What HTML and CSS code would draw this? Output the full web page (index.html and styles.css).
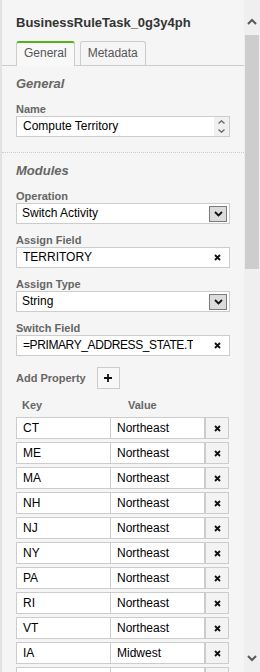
FILE: index.html
```html
<!DOCTYPE html>
<html lang="en">
<head>
    <meta charset="UTF-8">
    <meta name="viewport" content="width=device-width, initial-scale=1.0">
    <title>BusinessRuleTask properties</title>
    <link rel="stylesheet" href="styles.css">
</head>
<body>
    <div class="panel">
        <div class="title">BusinessRuleTask_0g3y4ph</div>
        <div class="tabs">
            <div class="tab active">General</div>
            <div class="tab">Metadata</div>
        </div>

        <div class="section">
            <div class="heading">General</div>
            <div class="field last">
                <div class="label">Name</div>
                <div class="input">
                    <span class="text">Compute Territory</span>
                    <span class="spinner">
                        <svg width="7" height="4" viewBox="0 0 7 4"><path d="M0.5 3.5L3.5 0.8L6.5 3.5" stroke="#666" stroke-width="1.3" fill="none"/></svg>
                        <svg width="7" height="4" viewBox="0 0 7 4"><path d="M0.5 0.5L3.5 3.2L6.5 0.5" stroke="#666" stroke-width="1.3" fill="none"/></svg>
                    </span>
                </div>
            </div>
        </div>

        <div class="section dotted">
            <div class="heading">Modules</div>
            <div class="field">
                <div class="label">Operation</div>
                <div class="input select">
                    <span class="text">Switch Activity</span>
                    <span class="drop"><svg width="9" height="6" viewBox="0 0 9 6"><path d="M1 1L4.5 4.5L8 1" stroke="#111" stroke-width="1.8" fill="none"/></svg></span>
                </div>
            </div>
            <div class="field">
                <div class="label">Assign Field</div>
                <div class="input">
                    <span class="text">TERRITORY</span>
                    <span class="clear"><svg width="7" height="7" viewBox="0 0 7 7"><path d="M1 1L6 6M6 1L1 6" stroke="#111" stroke-width="1.8"/></svg></span>
                </div>
            </div>
            <div class="field">
                <div class="label">Assign Type</div>
                <div class="input select">
                    <span class="text">String</span>
                    <span class="drop"><svg width="9" height="6" viewBox="0 0 9 6"><path d="M1 1L4.5 4.5L8 1" stroke="#111" stroke-width="1.8" fill="none"/></svg></span>
                </div>
            </div>
            <div class="field">
                <div class="label">Switch Field</div>
                <div class="input">
                    <span class="text tight">=PRIMARY_ADDRESS_STATE.T</span>
                    <span class="clear"><svg width="7" height="7" viewBox="0 0 7 7"><path d="M1 1L6 6M6 1L1 6" stroke="#111" stroke-width="1.8"/></svg></span>
                </div>
            </div>

            <div class="add-row">
                <span class="label">Add Property</span>
                <span class="add-btn"><svg width="8" height="8" viewBox="0 0 8 8"><path d="M4 0V8M0 4H8" stroke="#111" stroke-width="1.8"/></svg></span>
            </div>

            <div class="kv-head">
                <span class="kh-key">Key</span>
                <span class="kh-value">Value</span>
            </div>
            <div class="kv-row"><span class="cell key">CT</span><span class="cell value">Northeast</span><span class="del"><svg width="7" height="7" viewBox="0 0 7 7"><path d="M1 1L6 6M6 1L1 6" stroke="#111" stroke-width="1.8"/></svg></span></div>
            <div class="kv-row"><span class="cell key">ME</span><span class="cell value">Northeast</span><span class="del"><svg width="7" height="7" viewBox="0 0 7 7"><path d="M1 1L6 6M6 1L1 6" stroke="#111" stroke-width="1.8"/></svg></span></div>
            <div class="kv-row"><span class="cell key">MA</span><span class="cell value">Northeast</span><span class="del"><svg width="7" height="7" viewBox="0 0 7 7"><path d="M1 1L6 6M6 1L1 6" stroke="#111" stroke-width="1.8"/></svg></span></div>
            <div class="kv-row"><span class="cell key">NH</span><span class="cell value">Northeast</span><span class="del"><svg width="7" height="7" viewBox="0 0 7 7"><path d="M1 1L6 6M6 1L1 6" stroke="#111" stroke-width="1.8"/></svg></span></div>
            <div class="kv-row"><span class="cell key">NJ</span><span class="cell value">Northeast</span><span class="del"><svg width="7" height="7" viewBox="0 0 7 7"><path d="M1 1L6 6M6 1L1 6" stroke="#111" stroke-width="1.8"/></svg></span></div>
            <div class="kv-row"><span class="cell key">NY</span><span class="cell value">Northeast</span><span class="del"><svg width="7" height="7" viewBox="0 0 7 7"><path d="M1 1L6 6M6 1L1 6" stroke="#111" stroke-width="1.8"/></svg></span></div>
            <div class="kv-row"><span class="cell key">PA</span><span class="cell value">Northeast</span><span class="del"><svg width="7" height="7" viewBox="0 0 7 7"><path d="M1 1L6 6M6 1L1 6" stroke="#111" stroke-width="1.8"/></svg></span></div>
            <div class="kv-row"><span class="cell key">RI</span><span class="cell value">Northeast</span><span class="del"><svg width="7" height="7" viewBox="0 0 7 7"><path d="M1 1L6 6M6 1L1 6" stroke="#111" stroke-width="1.8"/></svg></span></div>
            <div class="kv-row"><span class="cell key">VT</span><span class="cell value">Northeast</span><span class="del"><svg width="7" height="7" viewBox="0 0 7 7"><path d="M1 1L6 6M6 1L1 6" stroke="#111" stroke-width="1.8"/></svg></span></div>
            <div class="kv-row"><span class="cell key">IA</span><span class="cell value">Midwest</span><span class="del"><svg width="7" height="7" viewBox="0 0 7 7"><path d="M1 1L6 6M6 1L1 6" stroke="#111" stroke-width="1.8"/></svg></span></div>
            <div class="kv-row"><span class="cell key"></span><span class="cell value"></span><span class="del"></span></div>
        </div>
    </div>

    <div class="scrollbar">
        <div class="sb-up"><svg width="10" height="7" viewBox="0 0 10 7"><path d="M1 6L5 2L9 6" stroke="#5a5a5a" stroke-width="2" fill="none"/></svg></div>
        <div class="sb-thumb"></div>
        <div class="sb-rest"></div>
        <div class="sb-down"><svg width="10" height="7" viewBox="0 0 10 7"><path d="M1 1L5 5L9 1" stroke="#5a5a5a" stroke-width="2" fill="none"/></svg></div>
    </div>
</body>
</html>
```
FILE: styles.css
```css
body { margin: 0; display: flex; height: 672px; overflow: hidden; background: #f5f5f5; font-family: "Liberation Sans", Arial, sans-serif; color: #000; }

.panel { width: 244px; flex: none; box-sizing: border-box; border-left: 2px solid #e2e2e2; overflow: hidden; }
.title { padding: 15px 14px 0; font-size: 13px; line-height: 16px; font-weight: bold; color: #333; white-space: nowrap; }

.tabs { display: flex; gap: 5px; margin-top: 10px; padding-left: 14px; border-bottom: 1px solid #ccc; height: 24px; }
.tab { box-sizing: border-box; height: 24px; padding: 0 7px; border: 1px solid #ccc; border-bottom: none; border-radius: 3px 3px 0 0; font-size: 12px; line-height: 22px; color: #555; }
.tab.active { border-top: 2px solid #52b415; line-height: 21px; background: #f8f8f8; height: 25px; }

.section { padding: 10px 14px 15px; }
.section.dotted { border-top: 1px dotted #ccc; }
.heading { font-size: 13px; line-height: 16px; font-weight: bold; font-style: italic; color: #666; margin-bottom: 11px; }

.label { font-size: 11px; line-height: 12px; font-weight: bold; color: #666; margin-bottom: 1px; }
.field { margin-bottom: 10px; }
.field.last { margin-bottom: 0; }

.input { display: flex; align-items: center; box-sizing: border-box; height: 21px; background: #fff; border: 1px solid #ccc; font-size: 12px; line-height: 19px; }
.input .text { flex: 1; min-width: 0; padding-left: 6px; overflow: hidden; white-space: nowrap; }
.input .text.tight { letter-spacing: -0.4px; }
.input.select .text { padding-left: 5px; }
.spinner { display: flex; flex-direction: column; align-items: center; justify-content: center; gap: 5px; width: 15px; height: 19px; background: #f0f0f0; }
.spinner svg { display: block; }
.clear { display: flex; width: 7px; margin: 0 8px 0 21px; }
.drop { display: flex; align-items: center; justify-content: center; box-sizing: border-box; width: 18px; height: 16px; margin-right: 2px; background: #dcdcdc; border: 1px solid #7a7a7a; }

.add-row { display: flex; align-items: center; margin-top: 11px; }
.add-row .label { margin: 0; }
.add-btn { display: flex; align-items: center; justify-content: center; box-sizing: border-box; width: 23px; height: 22px; margin-left: 11px; border: 1px solid #ccc; background: #f7f7f7; }

.kv-head { display: flex; margin: 10px 0 5px; font-size: 11px; line-height: 13px; font-weight: bold; color: #666; }
.kh-key { width: 95px; padding-left: 6px; box-sizing: border-box; }
.kh-value { padding-left: 17px; }

.kv-row { display: flex; height: 22px; margin-bottom: 3px; font-size: 12px; }
.cell { box-sizing: border-box; width: 95px; height: 22px; padding: 0 6px; background: #fff; border: 1px solid #ccc; line-height: 20px; white-space: nowrap; overflow: hidden; }
.cell.value { margin-left: -1px; }
.del { display: flex; align-items: center; justify-content: center; box-sizing: border-box; width: 24px; height: 22px; border: 1px solid #ccc; background: #f3f3f3; }

.scrollbar { width: 16px; flex: none; display: flex; flex-direction: column; background: #efefef; }
.sb-up { height: 35px; display: flex; justify-content: center; padding-top: 18px; box-sizing: border-box; }
.sb-thumb { height: 234px; margin: 0 1px; background: #cdcdcd; }
.sb-rest { flex: 1; }
.sb-down { height: 30px; display: flex; justify-content: center; padding-top: 13px; box-sizing: border-box; }
.sb-up svg, .sb-down svg { display: block; }
```
